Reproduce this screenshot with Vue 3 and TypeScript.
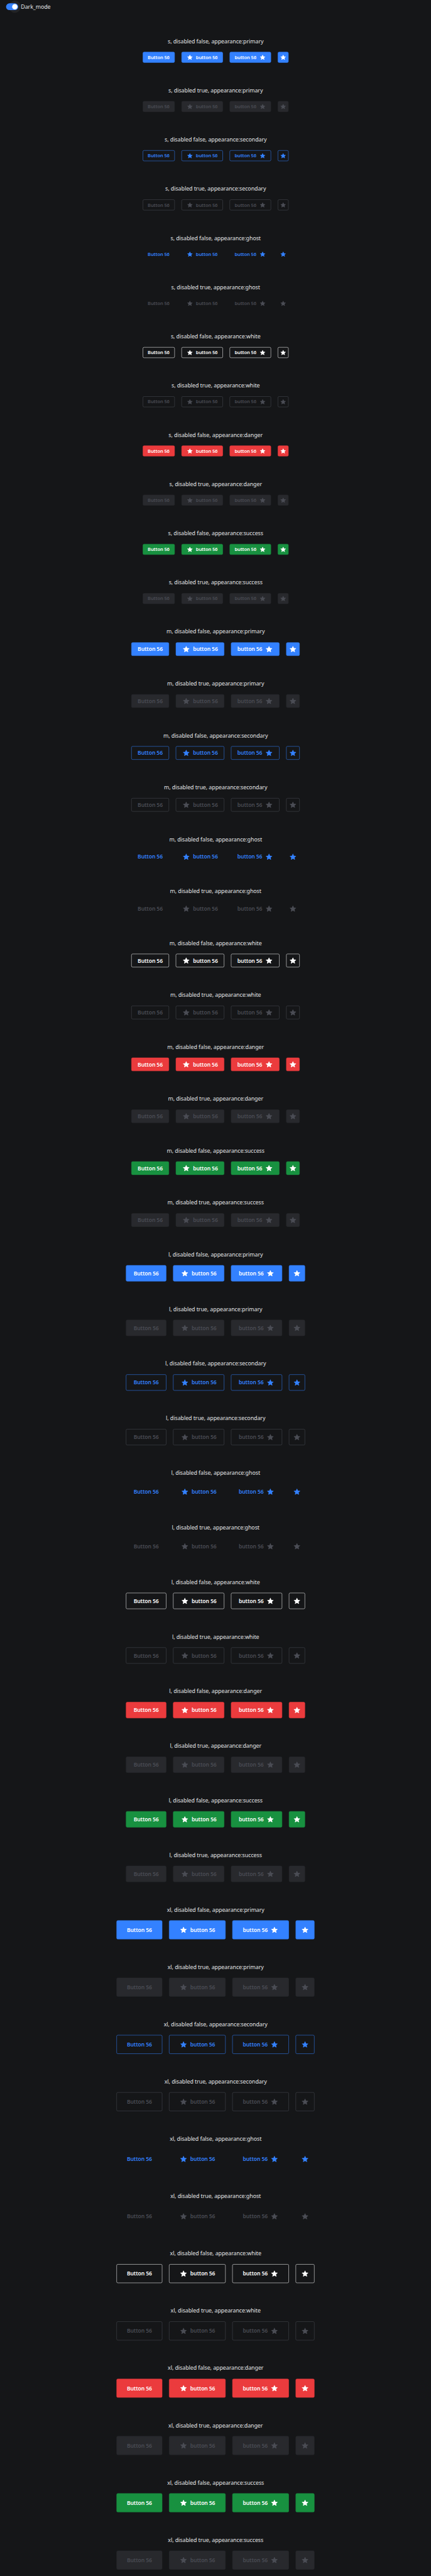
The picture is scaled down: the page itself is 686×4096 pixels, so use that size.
<script setup lang="ts">
type Size = 's' | 'm' | 'l' | 'xl'

interface Group {
  size: Size
  disabled: boolean
  appearance: string
}

const sizes: Size[] = ['s', 'm', 'l', 'xl']
const appearances: string[] = ['primary', 'secondary', 'ghost', 'white', 'danger', 'success']

const groups: Group[] = sizes.flatMap((size) =>
  appearances.flatMap((appearance) =>
    [false, true].map((disabled) => ({ size, disabled, appearance })),
  ),
)

const star =
  'M12 3.3c.35 0 .6.2.75.53l2.1 4.75c.1.25.3.4.57.42l5.2.42c.75.06 1.02.85.46 1.32l-4 3.35a.7.7 0 0 0-.22.66l1.25 5.1c.18.7-.6 1.2-1.22.8l-4.48-2.6a.8.8 0 0 0-.82 0l-4.48 2.6c-.62.4-1.4-.1-1.22-.8l1.25-5.1a.7.7 0 0 0-.22-.66l-4-3.35c-.56-.47-.29-1.26.46-1.32l5.2-.42c.27-.02.47-.17.57-.42l2.1-4.75c.15-.33.4-.53.75-.53z'
</script>

<template>
  <div class="viewport">
    <main class="page">
      <header class="header">
        <span class="toggle"><span class="halo"></span><span class="track"></span><span class="knob"></span></span>
        <span class="mode">Dark_mode</span>
      </header>
      <section
        v-for="g in groups"
        :key="`${g.size}-${g.appearance}-${g.disabled}`"
        class="group"
        :class="[g.size, g.appearance, { disabled: g.disabled }]"
      >
        <p class="label">{{ g.size }}, disabled {{ g.disabled }}, appearance:{{ g.appearance }}</p>
        <div class="row">
          <button class="btn" :disabled="g.disabled"><span class="text">Button 56</span></button>
          <button class="btn" :disabled="g.disabled">
            <svg class="icon" viewBox="0 0 24 24"><path :d="star" /></svg>
            <span class="text">button 56</span>
          </button>
          <button class="btn" :disabled="g.disabled">
            <span class="text">button 56</span>
            <svg class="icon" viewBox="0 0 24 24"><path :d="star" /></svg>
          </button>
          <button class="btn square" :disabled="g.disabled">
            <svg class="icon" viewBox="0 0 24 24"><path :d="star" /></svg>
          </button>
        </div>
      </section>
    </main>
  </div>
</template>

<style>
html,
body {
  background: #151618;
}
</style>

<style scoped>
.viewport {
  width: 686px;
  height: 4096px;
  overflow: hidden;
  background: #151618;
}
.page {
  width: 1280px;
  height: 7644px;
  transform: scale(0.5359);
  transform-origin: 0 0;
  font-family: 'Noto Sans', 'Open Sans', sans-serif;
  font-size: 16.5px;
  letter-spacing: -0.1px;
  color: #e3e4e6;
}
.header {
  display: flex;
  align-items: center;
  box-sizing: border-box;
  height: 60px;
  padding: 0 0 20px 18px;
  gap: 8px;
}
.toggle {
  position: relative;
  width: 36px;
  height: 20px;
}
.halo {
  position: absolute;
  left: 8px;
  top: -8px;
  width: 36px;
  height: 36px;
  border-radius: 50%;
  background: #232426;
}
.track {
  position: absolute;
  inset: 0;
  border-radius: 10px;
  background: #3381ff;
}
.knob {
  position: absolute;
  left: 18px;
  top: 2px;
  width: 16px;
  height: 16px;
  border-radius: 50%;
  background: #fff;
}
.mode {
  position: relative;
  line-height: 24px;
}
.group {
  display: flex;
  flex-direction: column;
  align-items: center;
  padding: 50px 0 20px;
}
.label {
  margin: 0 0 20px;
  padding-left: 1px;
  line-height: 24px;
  white-space: nowrap;
}
.row {
  display: flex;
  gap: 20px;
  height: var(--h);
}
.s {
  --h: 32px;
  --pad: 15px;
  --text: 65px;
  --slot: 20px;
  --font: 14px;
}
.m {
  --h: 40px;
  --pad: 19px;
  --text: 74px;
  --slot: 24px;
  --font: 16px;
}
.l {
  --h: 48px;
  --pad: 23px;
  --text: 74px;
  --slot: 24px;
  --font: 16px;
}
.xl {
  --h: 56px;
  --pad: 31px;
  --text: 74px;
  --slot: 24px;
  --font: 16px;
}
.btn {
  display: flex;
  align-items: center;
  justify-content: center;
  gap: 8px;
  box-sizing: border-box;
  height: var(--h);
  margin: 0;
  padding: 0 calc(var(--pad) - 1px);
  border: 1px solid var(--line);
  border-radius: 4px;
  background: var(--fill);
  color: var(--ink);
  font-family: inherit;
  font-size: var(--font);
  font-weight: 600;
  letter-spacing: -0.22px;
}
.square {
  width: var(--h);
  padding: 0;
}
.text {
  display: flex;
  justify-content: center;
  width: var(--text);
  line-height: 24px;
  white-space: nowrap;
}
.icon {
  width: var(--slot);
  height: var(--slot);
  flex: none;
  fill: currentColor;
}
.primary {
  --fill: #3381ff;
  --line: #3381ff;
  --ink: #fff;
}
.secondary {
  --fill: transparent;
  --line: #3381ff;
  --ink: #3381ff;
}
.ghost {
  --fill: transparent;
  --line: transparent;
  --ink: #3381ff;
}
.white {
  --fill: transparent;
  --line: #fff;
  --ink: #fff;
}
.danger {
  --fill: #eb3b3d;
  --line: #eb3b3d;
  --ink: #fff;
}
.success {
  --fill: #189140;
  --line: #189140;
  --ink: #fff;
}
.disabled {
  --ink: #4a4c54;
}
.disabled.primary,
.disabled.danger,
.disabled.success {
  --fill: #28292d;
  --line: #28292d;
}
.disabled.secondary,
.disabled.white {
  --line: #4a4c54;
}
</style>
